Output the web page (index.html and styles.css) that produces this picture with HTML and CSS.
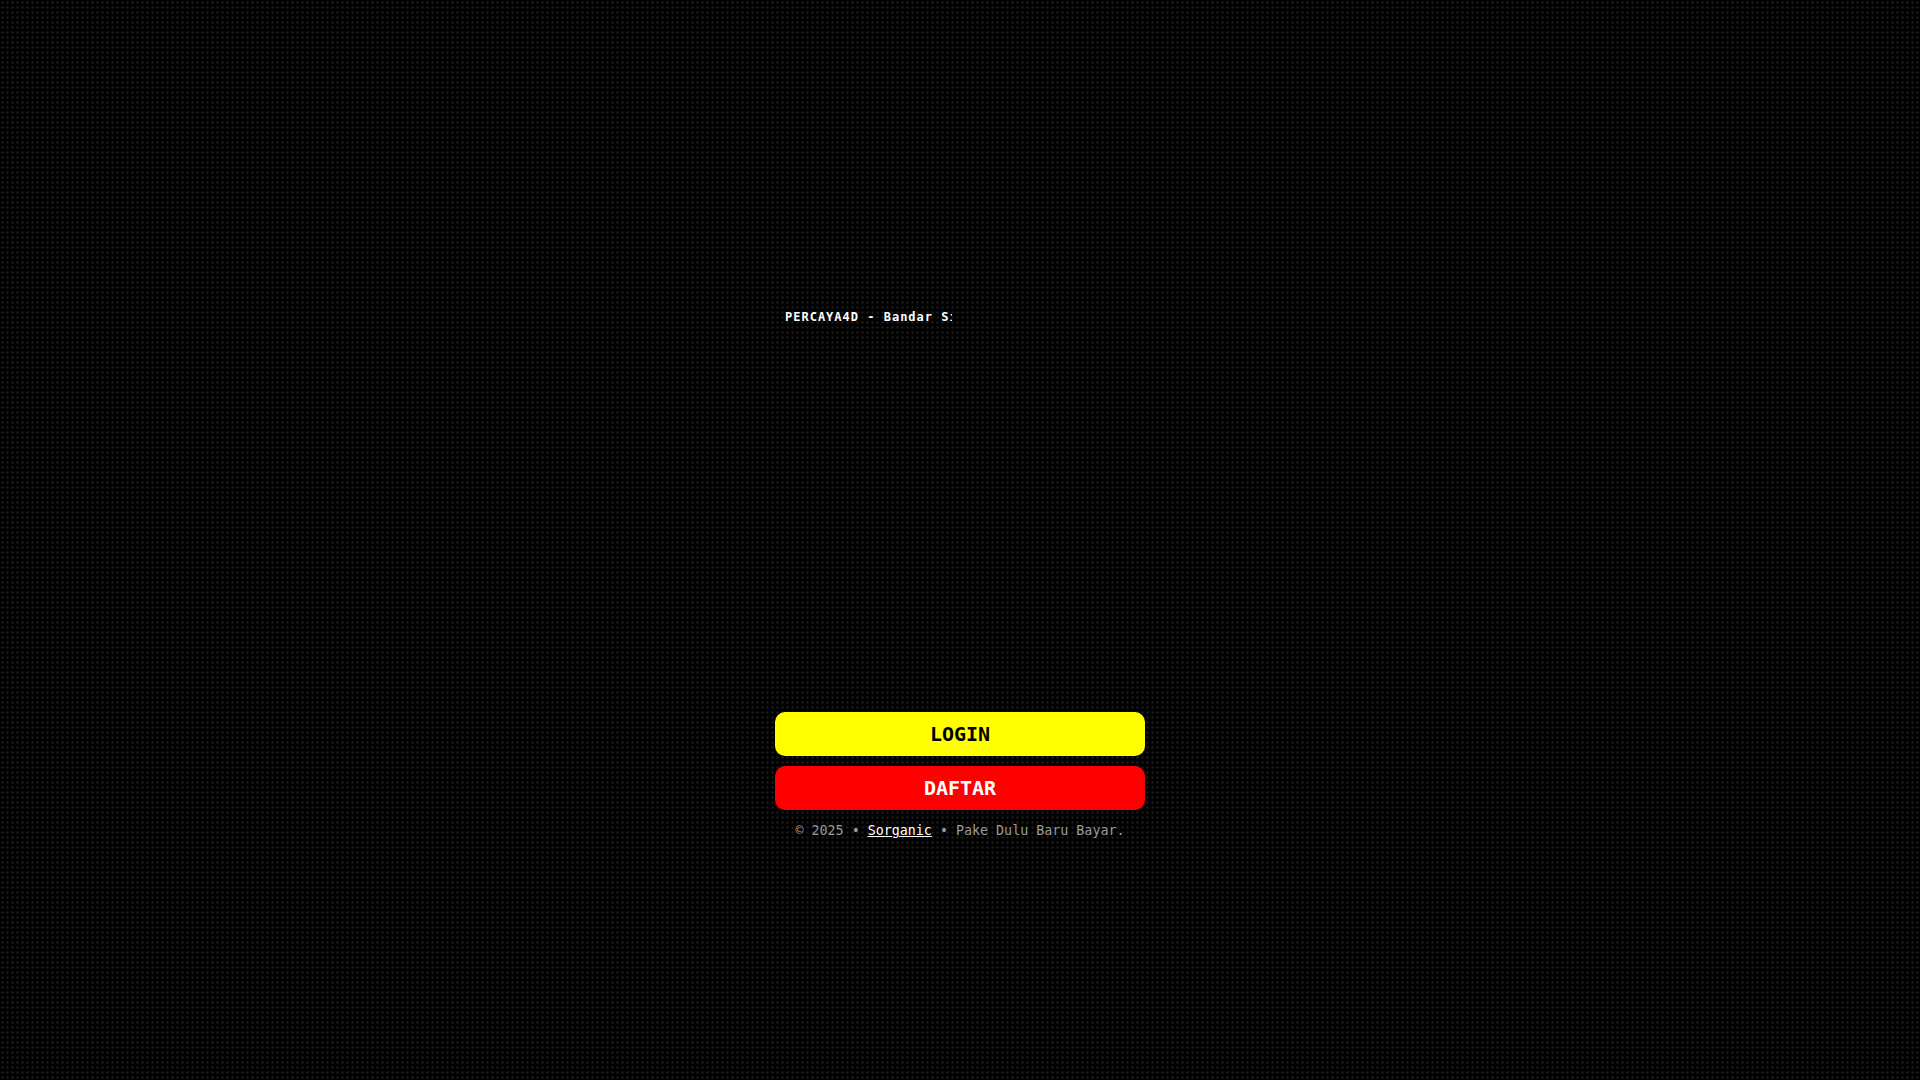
FILE: index.html
```
<!DOCTYPE html>
<html lang="id">
<head>
  <meta charset="UTF-8">
  <meta name="viewport" content="width=device-width, initial-scale=1.0">
  <title>PERCAYA4D</title>
  <link rel="stylesheet" href="styles.css">
</head>
<body>
  <main class="wrap">
    <div class="slide">
      <h1 class="title">PERCAYA4D - Bandar Si</h1>
    </div>
    <div class="links">
      <a class="btn login" href="#login">LOGIN</a>
      <a class="btn daftar" href="#daftar">DAFTAR</a>
    </div>
    <footer class="footer">© 2025 • <a href="#home">Sorganic</a> • Pake Dulu Baru Bayar.</footer>
  </main>
</body>
</html>
```

FILE: styles.css
```
*{box-sizing:border-box;}
body{
  margin:0;
  min-height:100vh;
  display:flex;
  align-items:center;
  justify-content:center;
  font-family:"DejaVu Sans Mono",monospace;
  color:#fff;
  background-color:#000;
  background-image:radial-gradient(#222 10%,transparent 50%);
  background-size:5px 5px;
}
.wrap{width:100%;max-width:390px;min-height:604px;padding:0 10px;display:flex;flex-direction:column;}
.slide{flex:1;padding:72px 10px 0;}
.title{width:167px;margin:0;overflow:hidden;white-space:nowrap;font-size:12px;line-height:14px;letter-spacing:1px;}
.links{display:flex;flex-direction:column;gap:10px;}
.btn{
  padding:10px;
  border-radius:10px;
  font-size:20px;
  font-weight:bold;
  line-height:24px;
  text-align:center;
  text-decoration:none;
}
.login{background:#ff0;color:#000;}
.daftar{background:#f00;color:#fff;}
.footer{padding-top:10px;font-size:smaller;line-height:22px;text-align:center;color:#999;}
.footer a{color:#fff;}
```
